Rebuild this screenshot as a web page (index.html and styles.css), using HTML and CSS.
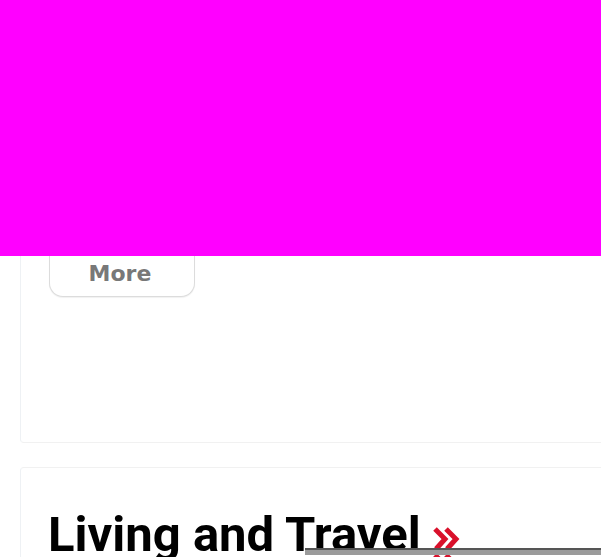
FILE: index.html
```html
<!DOCTYPE html>
<html>
<head>
<meta charset="utf-8">
<link rel="stylesheet" href="styles.css">
</head>
<body>
<div class="hero"></div>
<section class="card card-top">
  <button class="more">More</button>
</section>
<section class="card card-bottom">
  <h2 class="title">Living and Travel<svg class="chev" width="30" height="50" viewBox="0 0 30 50"><g fill="none" stroke="#d9112b" stroke-width="5" stroke-linejoin="miter" stroke-linecap="butt"><path d="M3 2 L13 12 L4 22"/><path d="M14 2 L24 12 L15 22"/><path d="M3 28 L13 38 L4 48"/><path d="M14 28 L24 38 L15 48"/></g></svg></h2>
</section>
<div class="scrollbar"></div>
</body>
</html>
```
FILE: styles.css
```css
html, body {
  margin: 0;
  padding: 0;
  background: #ffffff;
  overflow: hidden;
}
body {
  width: 601px;
  height: 557px;
  position: relative;
  font-family: "Liberation Sans", Arial, sans-serif;
}
.hero {
  height: 256px;
  background: #ff00ff;
}
.card {
  margin-left: 20px;
  background: #fff;
}
.card-top {
  height: 186px;
  border-left: 1px solid #eef1f4;
  border-bottom: 1px solid #f1f1f1;
  border-bottom-left-radius: 4px;
  display: flex;
  align-items: flex-start;
  padding-left: 28px;
}
.more {
  width: 146px;
  height: 41px;
  margin: 0;
  padding: 0 4px 4px 0;
  background: #fff;
  border: 1px solid #dcdcdc;
  border-top: none;
  border-radius: 0 0 14px 14px;
  box-shadow: 0 1px 1px rgba(0,0,0,0.06);
  font-family: "DejaVu Sans", "Liberation Sans", sans-serif;
  font-weight: 700;
  font-size: 22px;
  color: #787878;
  line-height: 36px;
}
.card-bottom {
  margin-top: 24px;
  border-top: 1px solid #f1f1f1;
  border-left: 1px solid #eef1f4;
  border-top-left-radius: 4px;
  height: 200px;
  padding-left: 27px;
}
.title {
  margin: 0;
  padding-top: 39px;
  font-family: Roboto, "Liberation Sans", sans-serif;
  font-weight: 700;
  font-size: 49px;
  line-height: 56px;
  letter-spacing: 0;
  color: #000;
  white-space: nowrap;
}
.chev {
  margin-left: 11px;
  vertical-align: -26px;
}
.scrollbar {
  position: absolute;
  left: 305px;
  right: 0;
  top: 548px;
  height: 5px;
  background: #9b9b9b;
  border-top: 2px solid #555;
}
```
